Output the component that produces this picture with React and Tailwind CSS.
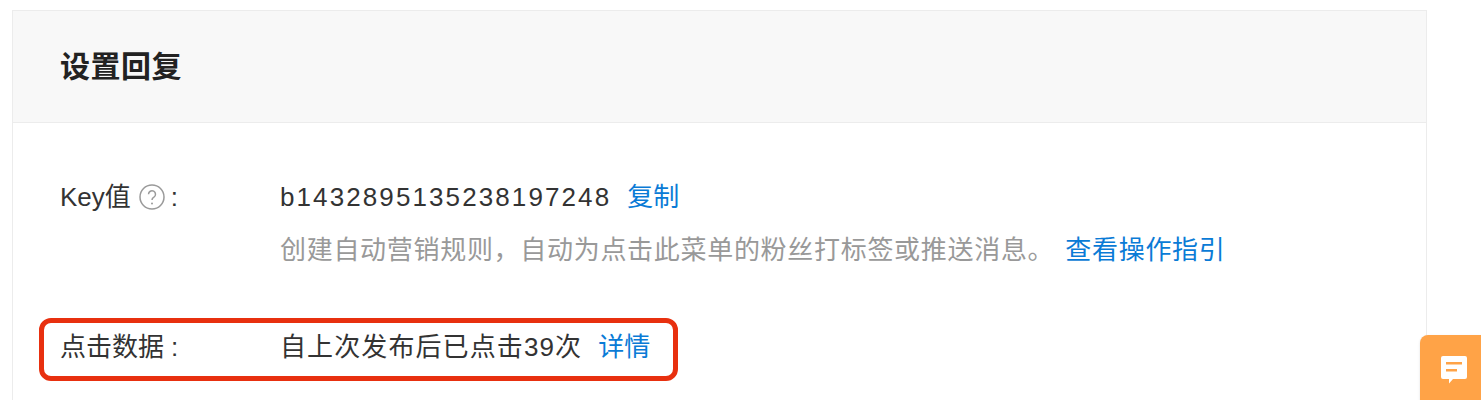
const font = { fontFamily: '"Liberation Sans", "Noto Sans CJK SC", sans-serif' }

function Row({ label, children, className = '' }) {
  return (
    <div className={`flex h-[40px] items-center ${className}`}>
      <div className="flex w-[220px] shrink-0 items-center">{label}</div>
      <div className="flex items-center">{children}</div>
    </div>
  )
}

export default function App() {
  return (
    <div
      className="relative h-[400px] w-[1481px] overflow-hidden bg-white pl-3 pt-[10px] text-[26px] text-[#333]"
      style={font}
    >
      <div className="h-[420px] w-[1415px] border border-[#ececec]">
        <div className="flex h-[112px] items-center border-b border-[#ececec] bg-[#f8f8f8] pl-[47px]">
          <h1 className="text-[30px] font-semibold tracking-[0.5px] text-[#222]">设置回复</h1>
        </div>
        <div className="pl-[47px] pt-[54px]">
          <Row label={
            <>
              Key值
              <svg viewBox="0 0 26 26" className="ml-2 h-[26px] w-[26px]" fill="none">
                <circle cx="13" cy="13" r="12" stroke="#9a9a9a" strokeWidth="1.5" />
                <path d="M9.500 10.200a3.500 3.500 0 1 1 5.400 3c-1.300.8-1.900 1.400-1.900 2.800" stroke="#9a9a9a" strokeWidth="1.500" />
                <circle cx="13" cy="19.400" r="1" fill="#9a9a9a" />
              </svg>
              <span className="ml-[6px]">:</span>
            </>
          }>
            <span className="tracking-[2.1px]">b1432895135238197248</span>
            <a className="ml-4 text-[#0a7bd6]">复制</a>
          </Row>
          <div className="ml-[220px] mt-[13px] flex h-[40px] items-center text-[#999]">
            <span className="tracking-[0.7px]">创建自动营销规则，自动为点击此菜单的粉丝打标签或推送消息。</span>
            <a className="ml-[11px] tracking-[0.7px] text-[#0a7bd6]">查看操作指引</a>
          </div>
          <Row className="mt-[57px]" label={<>点击数据<span className="ml-[7px]">:</span></>}>
            <span className="tracking-[1.1px]">自上次发布后已点击39次</span>
            <a className="ml-4 text-[#0a7bd6]">详情</a>
          </Row>
        </div>
      </div>

      <div className="absolute left-[39px] top-[318px] h-[63px] w-[639px] rounded-[12px] border-[5px] border-[#e8300f]" />

      <div className="absolute left-[1420px] top-[335px] flex h-[80px] w-[61px] justify-center rounded-tl-[8px] bg-[#ffa347] pl-[6px] pt-[20px] shadow-sm">
        <svg viewBox="0 0 28 30" className="h-[30px] w-[28px]">
          <path d="M3 1h22a2 2 0 0 1 2 2v19a2 2 0 0 1-2 2H13l-4 4.500V24H3a2 2 0 0 1-2-2V3a2 2 0 0 1 2-2z" fill="#fff" />
          <rect x="6" y="7" width="16" height="2.500" fill="#ffa347" />
          <rect x="6" y="14" width="11" height="2.500" fill="#ffa347" />
        </svg>
      </div>
    </div>
  )
}
